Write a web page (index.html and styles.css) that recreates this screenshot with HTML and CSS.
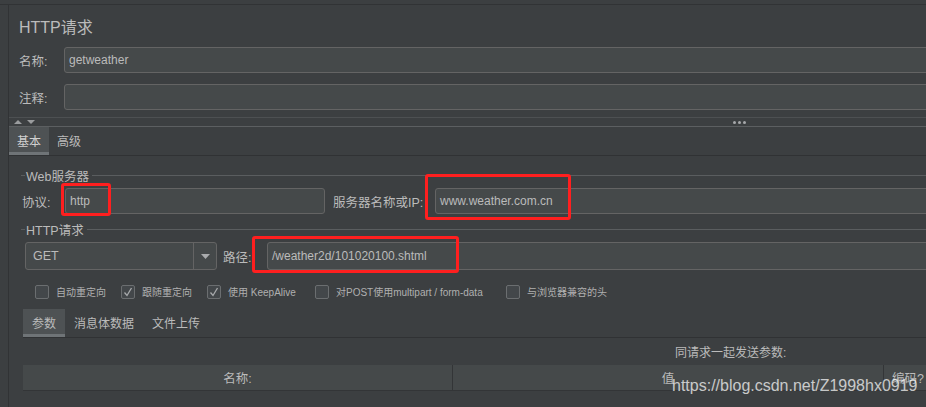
FILE: index.html
```html
<!DOCTYPE html>
<html lang="zh">
<head>
<meta charset="utf-8">
<title>HTTP请求</title>
<link rel="stylesheet" href="styles.css">
</head>
<body>
<div class="app">
  <div class="gutter"></div>
  <div class="panel">
    <div class="title">HTTP请求</div>
    <div class="field-row"><span class="lbl">名称:</span><div class="input">getweather</div></div>
    <div class="field-row"><span class="lbl">注释:</span><div class="input"></div></div>
    <div class="splitter">
      <svg class="arrows" width="24" height="6" viewBox="0 0 24 6"><path d="M5 1 L9 5 L1 5 Z" fill="#9a9c9e"/><path d="M14 1 L22 1 L18 5 Z" fill="#9a9c9e"/></svg>
      <span class="dots"><i></i><i></i><i></i></span>
    </div>
    <div class="tabs main-tabs"><div class="tab active">基本</div><div class="tab">高级</div></div>
    <div class="content">
      <div class="group-title"><span class="gl-short"></span><span class="gt">Web服务器</span><span class="gl"></span></div>
      <div class="server-row">
        <span class="lbl2 lbl-proto">协议:</span>
        <div class="input proto">http</div>
        <span class="lbl2 lbl-host">服务器名称或IP:</span>
        <div class="input grow">www.weather.com.cn</div>
      </div>
      <div class="group-title g2"><span class="gl-short"></span><span class="gt">HTTP请求</span><span class="gl"></span></div>
      <div class="req-row">
        <div class="combo"><span class="combo-val">GET</span><span class="combo-btn"><svg width="9" height="5" viewBox="0 0 9 5"><path d="M0 0 L9 0 L4.5 5 Z" fill="#a9abad"/></svg></span></div>
        <span class="lbl2 lbl-path">路径:</span>
        <div class="input grow tall">/weather2d/101020100.shtml</div>
      </div>
      <div class="checks">
        <label class="chk"><span class="box"></span><span>自动重定向</span></label>
        <label class="chk"><span class="box"><svg width="12" height="12" viewBox="0 0 12 12"><path d="M2.5 6.5 L5 9.5 L9.5 2" fill="none" stroke="#a8aaac" stroke-width="1.3"/></svg></span><span>跟随重定向</span></label>
        <label class="chk"><span class="box"><svg width="12" height="12" viewBox="0 0 12 12"><path d="M2.5 6.5 L5 9.5 L9.5 2" fill="none" stroke="#a8aaac" stroke-width="1.3"/></svg></span><span>使用 KeepAlive</span></label>
        <label class="chk"><span class="box"></span><span>对POST使用multipart / form-data</span></label>
        <label class="chk"><span class="box"></span><span>与浏览器兼容的头</span></label>
      </div>
      <div class="tabs sub-tabs"><div class="tab active">参数</div><div class="tab">消息体数据</div><div class="tab">文件上传</div></div>
      <div class="send-title">同请求一起发送参数:</div>
      <div class="table-head">
        <div class="th c1">名称:</div>
        <div class="th c2">值</div>
        <div class="th c3">编码?</div>
      </div>
    </div>
  </div>
</div>
<div class="mark m1"></div>
<div class="mark m2"></div>
<div class="mark m3"></div>
<div class="watermark">https://blog.csdn.net/Z1998hx0919</div>
</body>
</html>
```
FILE: styles.css
```css
html, body {
  margin: 0;
  padding: 0;
}
body {
  width: 926px;
  height: 407px;
  overflow: hidden;
  background: #3c3f41;
  color: #bbbbbb;
  font-family: "Liberation Sans", "Noto Sans CJK SC", sans-serif;
  font-size: 12px;
  position: relative;
}
.app {
  margin-top: 4px;
  border-top: 1px solid #313335;
  display: flex;
  height: 402px;
}
.gutter {
  width: 8px;
  flex: none;
}
.panel {
  flex: 1;
  min-width: 0;
  border-left: 1px solid #313335;
  overflow: hidden;
}
.title {
  height: 42px;
  display: flex;
  align-items: center;
  padding-left: 10px;
  font-size: 16px;
  color: #bbbbbb;
}
.field-row {
  display: flex;
  align-items: center;
  height: 26px;
  margin-bottom: 11px;
  padding-left: 10px;
}
.field-row:nth-of-type(3) {
  margin-bottom: 0;
}
.lbl {
  width: 45px;
  flex: none;
  font-size: 12.5px;
}
.input {
  box-sizing: border-box;
  height: 26px;
  background: #45494a;
  border: 1px solid #646464;
  border-radius: 3px;
  display: flex;
  align-items: center;
  padding-left: 4px;
  font-size: 12px;
  color: #bbbbbb;
  flex: 1;
  margin-right: -10px;
  white-space: nowrap;
}
.splitter {
  margin-top: 7px;
  height: 8px;
  border-top: 1px solid #4d5052;
  border-bottom: 1px solid #5c5f61;
  display: flex;
  align-items: center;
  position: relative;
}
.arrows {
  margin-left: 4px;
  display: block;
}
.dots {
  display: flex;
  gap: 2px;
  margin-left: 696px;
}
.dots i {
  display: block;
  width: 3px;
  height: 3px;
  border-radius: 50%;
  background: #a6a8aa;
}
.tabs {
  display: flex;
  height: 28px;
  border-bottom: 1px solid #303234;
}
.tab {
  padding: 0 8px;
  display: flex;
  align-items: center;
  font-size: 12px;
  box-sizing: border-box;
  height: 28px;
  border-bottom: 3px solid transparent;
  padding-top: 2px;
  color: #bbbbbb;
}
.tab.active {
  background: #4e5254;
  border-bottom-color: #6f7477;
}
.main-tabs .tab.active {
  color: #d0d0d0;
}
.content {
  padding-left: 12px;
}
.group-title {
  display: flex;
  align-items: center;
  height: 22px;
  margin-top: 8px;
  font-size: 12.5px;
}
.group-title.g2 {
  margin-top: 4px;
}
.gl-short {
  width: 4px;
  height: 1px;
  background: #5a5d5f;
  flex: none;
}
.gt {
  padding: 0 3px 0 1px;
}
.gl {
  flex: 1;
  height: 1px;
  background: #5a5d5f;
}
.server-row, .req-row {
  display: flex;
  align-items: center;
  margin-top: 2px;
}
.lbl2 {
  flex: none;
  font-size: 12.5px;
}
.lbl-proto {
  width: 44px;
  padding-left: 1px;
  box-sizing: border-box;
}
.input.proto {
  flex: none;
  width: 260px;
  margin-right: 0;
}
.lbl-host {
  width: 102px;
  margin-left: 8px;
}
.input.grow {
  flex: 1;
  margin-right: -10px;
}
.input.tall {
  height: 28px;
}
.req-row {
  height: 28px;
  padding-left: 4px;
}
.combo {
  box-sizing: border-box;
  width: 192px;
  height: 28px;
  flex: none;
  background: #45494a;
  border: 1px solid #646464;
  border-radius: 3px;
  display: flex;
  align-items: stretch;
}
.combo-val {
  flex: 1;
  display: flex;
  align-items: center;
  padding-left: 7px;
  font-size: 12.5px;
}
.combo-btn {
  width: 22px;
  border-left: 1px solid #646464;
  display: flex;
  align-items: center;
  justify-content: center;
}
.lbl-path {
  width: 44px;
  margin-left: 6px;
}
.checks {
  display: grid;
  grid-template-columns: 86px 86px 108px 191px auto;
  margin-top: 14px;
  padding-left: 14px;
  height: 14px;
  align-items: center;
  font-size: 10px;
  color: #b0b0b0;
}
.chk {
  display: flex;
  align-items: center;
  white-space: nowrap;
}
.box {
  box-sizing: border-box;
  width: 14px;
  height: 14px;
  border: 1px solid #6b6e70;
  border-radius: 2px;
  background: #43474a;
  margin-right: 7px;
  flex: none;
  display: flex;
  align-items: center;
  justify-content: center;
}
.box svg {
  display: block;
}
.sub-tabs {
  margin-top: 11px;
  margin-left: 2px;
}
.sub-tabs .tab {
  padding: 0 9px;
  padding-top: 2px;
}
.send-title {
  height: 27px;
  display: flex;
  align-items: center;
  padding-left: 654px;
  font-size: 12px;
}
.table-head {
  display: flex;
  height: 26px;
  box-sizing: border-box;
  margin-left: 2px;
  background: #45494a;
  border-bottom: 1px solid #333537;
}
.th {
  display: flex;
  align-items: center;
  justify-content: center;
  font-size: 12.5px;
  box-sizing: border-box;
  flex: none;
}
.c1 { width: 429px; }
.c2 { width: 431px; border-left: 1px solid #333537; }
.c3 { width: 60px; border-left: 1px solid #333537; justify-content: flex-start; padding-left: 8px; }
.mark {
  position: absolute;
  box-sizing: border-box;
  border: 3px solid #ff1f1f;
  border-radius: 3px;
}
.m1 { left: 61px; top: 183px; width: 50px; height: 33px; }
.m2 { left: 425px; top: 174px; width: 146px; height: 46px; }
.m3 { left: 252px; top: 236px; width: 207px; height: 37px; }
.watermark {
  position: absolute;
  left: 672px;
  top: 378px;
  font-family: "Liberation Sans", sans-serif;
  font-size: 16px;
  line-height: 16px;
  color: rgba(255, 255, 255, 0.72);
  white-space: nowrap;
}
```
